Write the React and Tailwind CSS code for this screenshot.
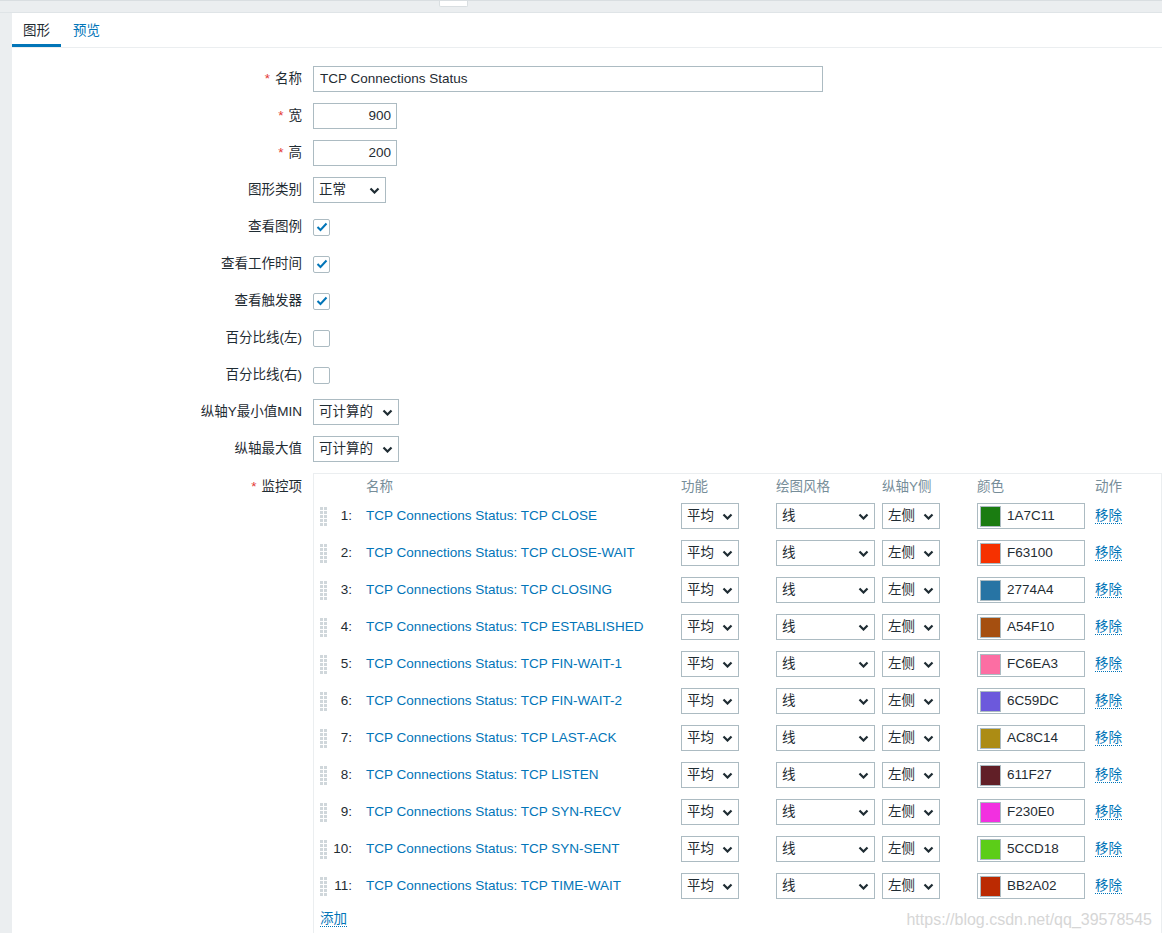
import React from "react";

const items = [
  ["TCP CLOSE", "1A7C11"],
  ["TCP CLOSE-WAIT", "F63100"],
  ["TCP CLOSING", "2774A4"],
  ["TCP ESTABLISHED", "A54F10"],
  ["TCP FIN-WAIT-1", "FC6EA3"],
  ["TCP FIN-WAIT-2", "6C59DC"],
  ["TCP LAST-ACK", "AC8C14"],
  ["TCP LISTEN", "611F27"],
  ["TCP SYN-RECV", "F230E0"],
  ["TCP SYN-SENT", "5CCD18"],
  ["TCP TIME-WAIT", "BB2A02"],
];

const Chevron = () => (
  <svg width="11" height="7" viewBox="0 0 11 7" className="shrink-0">
    <path d="M1.5 1.5l4 4 4-4" fill="none" stroke="#1f2c33" strokeWidth="2.2" />
  </svg>
);

const Select = ({ value, width }) => (
  <div className={`${width} h-[26px] border border-[#acbbc2] bg-white flex items-center justify-between pl-[5px] pr-[5px]`}>
    <span>{value}</span>
    <Chevron />
  </div>
);

const Checkbox = ({ checked }) => (
  <div className="w-[17px] h-[17px] border border-[#acbbc2] rounded-[2px] bg-white flex items-center justify-center">
    {checked && (
      <svg width="12" height="10" viewBox="0 0 12 10">
        <path d="M1.5 5l3 3 6-6.5" fill="none" stroke="#0275b8" strokeWidth="2" />
      </svg>
    )}
  </div>
);

const Label = ({ children, required }) => (
  <div className="text-right text-[#1f2c33]">
    {required && <span className="text-[#e33734] mr-[5px]">*</span>}
    {children}
  </div>
);

// drag handle dots
const Handle = () => (
  <div className="grid grid-cols-2 gap-[1px] w-[7px]">
    {Array.from({ length: 10 }).map((_, i) => (
      <div key={i} className="w-[3px] h-[3px] bg-[#d0d7db]" />
    ))}
  </div>
);

const FormRow = ({ label, required, children }) => (
  <div className="grid grid-cols-[290px_1fr] gap-x-[11px] h-[26px] items-center">
    <Label required={required}>{label}</Label>
    <div className="flex items-center">{children}</div>
  </div>
);

const cols = "grid grid-cols-[42px_325px_95px_106px_95px_118px_1fr]";

export default function App() {
  return (
    <div
      className="relative min-h-[933px] bg-[#ebeef0] text-[13.5px] text-[#1f2c33] overflow-hidden"
      style={{ fontFamily: '"Liberation Sans", Arial, "Noto Sans CJK SC", sans-serif' }}
    >
      <div className="h-[1px] bg-[#d9dee1]" />
      <div className="relative h-[12px] border-b border-[#dfe4e7]">
        <div className="absolute left-[439px] top-0 w-[29px] h-[6px] bg-white border border-t-0 border-[#d9dee1] rounded-b-[2px]" />
      </div>
      <div className="ml-[12px] bg-white min-h-[920px]">
        {/* tabs */}
        <div className="flex h-[35px] border-b border-[#ebeef0]">
          <div className="px-[11px] flex items-center border-b-[3px] border-[#0275b8] pt-[5px] text-[#1f2c33]">图形</div>
          <div className="px-[12px] flex items-center pt-[2px] text-[#0275b8]">预览</div>
        </div>

        <div className="pt-[18px] flex flex-col gap-[11px]">
          <FormRow label="名称" required>
            <div className="w-[510px] h-[26px] border border-[#acbbc2] flex items-center px-[6px]">TCP Connections Status</div>
          </FormRow>
          <FormRow label="宽" required>
            <div className="w-[84px] h-[26px] border border-[#acbbc2] flex items-center justify-end px-[5px]">900</div>
          </FormRow>
          <FormRow label="高" required>
            <div className="w-[84px] h-[26px] border border-[#acbbc2] flex items-center justify-end px-[5px]">200</div>
          </FormRow>
          <FormRow label="图形类别">
            <Select value="正常" width="w-[73px]" />
          </FormRow>
          <FormRow label="查看图例">
            <Checkbox checked />
          </FormRow>
          <FormRow label="查看工作时间">
            <Checkbox checked />
          </FormRow>
          <FormRow label="查看触发器">
            <Checkbox checked />
          </FormRow>
          <FormRow label="百分比线(左)">
            <Checkbox />
          </FormRow>
          <FormRow label="百分比线(右)">
            <Checkbox />
          </FormRow>
          <FormRow label="纵轴Y最小值MIN">
            <Select value="可计算的" width="w-[86px]" />
          </FormRow>
          <FormRow label="纵轴最大值">
            <Select value="可计算的" width="w-[86px]" />
          </FormRow>

          {/* items table */}
          <div className="grid grid-cols-[290px_1fr] gap-x-[11px]">
            <div className="pt-[4px] leading-[20px]">
              <Label required>监控项</Label>
            </div>
            <div className="border border-[#ebeef0] pt-[3px] pb-[10px]">
              <div className={`${cols} leading-[20px] text-[#768d99]`}>
                <div />
                <div className="pl-[10px]">名称</div>
                <div>功能</div>
                <div>绘图风格</div>
                <div>纵轴Y侧</div>
                <div>颜色</div>
                <div>动作</div>
              </div>
              <div className="mt-[6px] flex flex-col gap-[11px]">
                {items.map(([name, color], i) => (
                  <div key={name} className={`${cols} h-[26px] items-center`}>
                    <div className="flex items-center justify-between pl-[6px] pr-[4px]">
                      <Handle />
                      <span>{i + 1}:</span>
                    </div>
                    <div className="pl-[10px] text-[#0275b8] whitespace-nowrap">TCP Connections Status: {name}</div>
                    <div><Select value="平均" width="w-[58px]" /></div>
                    <div><Select value="线" width="w-[99px]" /></div>
                    <div><Select value="左侧" width="w-[58px]" /></div>
                    <div>
                      <div className="w-[108px] h-[26px] border border-[#acbbc2] flex items-center pl-[2px]">
                        <div className="w-[21px] h-[21px] border border-[#acbbc2]" style={{ backgroundColor: `#${color}` }} />
                        <span className="ml-[6px]">{color}</span>
                      </div>
                    </div>
                    <div>
                      <span className="text-[#0275b8] border-b border-dotted border-[#0275b8]">移除</span>
                    </div>
                  </div>
                ))}
              </div>
              <div className="mt-[10px] pl-[6px] leading-[20px]">
                <span className="text-[#0275b8] border-b border-dotted border-[#0275b8]">添加</span>
              </div>
            </div>
          </div>
        </div>
      </div>
      <div className="absolute right-[10px] bottom-[8px] text-[16px] text-[#d6d6d6]">https://blog.csdn.net/qq_39578545</div>
    </div>
  );
}
